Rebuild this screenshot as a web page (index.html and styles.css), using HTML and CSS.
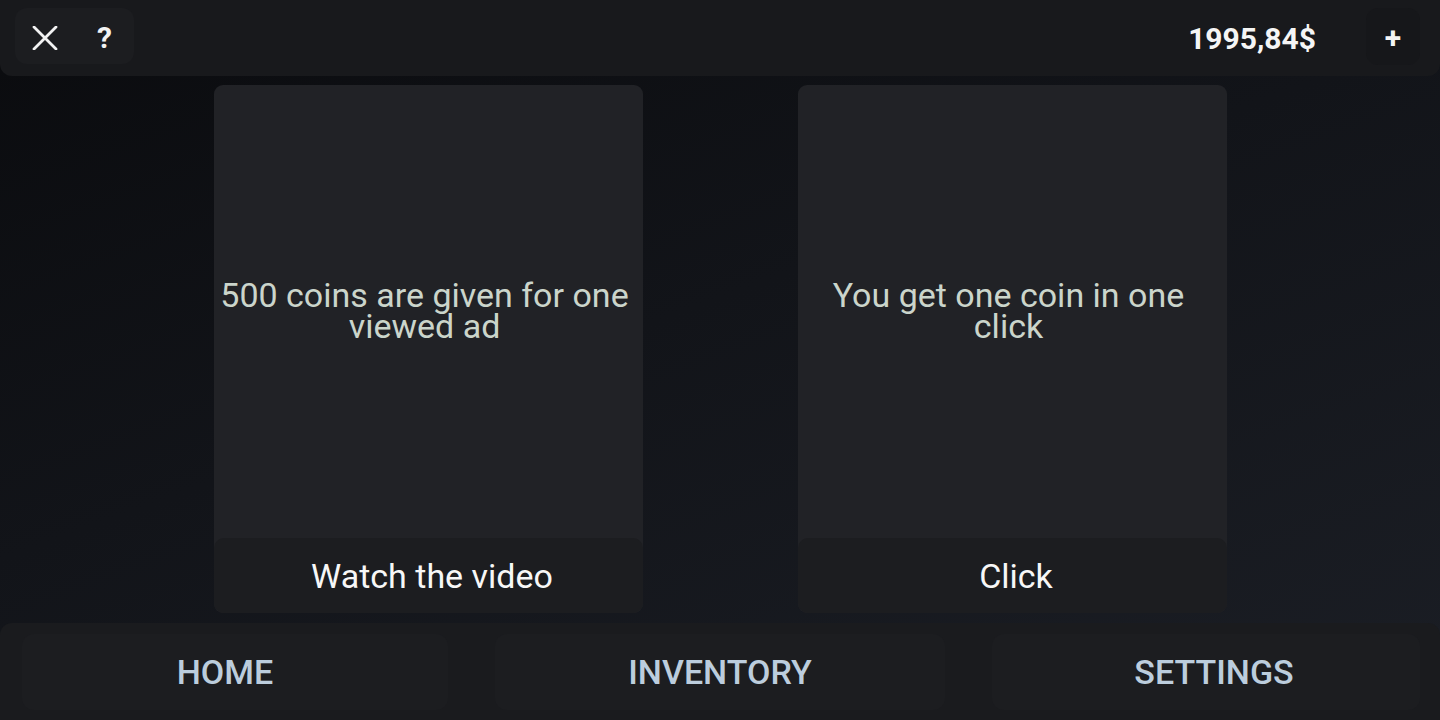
FILE: index.html
```html
<!DOCTYPE html>
<html lang="en">
<head>
  <meta charset="UTF-8" />
  <meta name="viewport" content="width=device-width, initial-scale=1.0"/>
  <title>Earn coins</title>
  <link rel="stylesheet" href="styles.css">
</head>
<body>

  <div class="topbar">
    <div class="tools">
      <button class="tool close" aria-label="Close">
        <svg width="26" height="24" viewBox="0 0 26 24">
          <path d="M2 1 L24 23 M24 1 L2 23" stroke="#f2f2f2" stroke-width="2.8" stroke-linecap="round"/>
        </svg>
      </button>
      <button class="tool help">?</button>
    </div>
    <div class="wallet">
      <span class="balance">1995,84$</span>
      <button class="add">+</button>
    </div>
  </div>

  <div class="cards">
    <div class="card">
      <div class="card-text">500 coins are given for one viewed ad</div>
      <button class="card-btn">Watch the video</button>
    </div>
    <div class="card">
      <div class="card-text">You get one coin in one click</div>
      <button class="card-btn">Click</button>
    </div>
  </div>

  <div class="nav">
    <button class="nav-btn home">HOME</button>
    <button class="nav-btn inventory">INVENTORY</button>
    <button class="nav-btn settings">SETTINGS</button>
  </div>

</body>
</html>
```

FILE: styles.css
```css
body {
  margin: 0;
  height: 720px;
  overflow: hidden;
  font-family: Roboto, 'Noto Sans', sans-serif;
  background: linear-gradient(160deg, #0a0b0e 0%, #121419 45%, #1b1e25 100%);
  display: flex;
  flex-direction: column;
}

button {
  font-family: inherit;
  border: none;
  cursor: pointer;
}

.topbar {
  height: 76px;
  box-sizing: border-box;
  padding: 8px 20px 0 15px;
  background-color: #18191c;
  border-radius: 0 0 12px 12px;
  display: flex;
  justify-content: space-between;
  align-items: flex-start;
}

.tools {
  width: 119px;
  height: 56px;
  background-color: #1c1d20;
  border-radius: 12px;
  display: flex;
  align-items: center;
  padding: 3px 0 0 16px;
  box-sizing: border-box;
}

.tool {
  background: none;
  color: #f2f2f2;
  padding: 0;
  display: flex;
  align-items: center;
  justify-content: center;
}

.close {
  width: 28px;
  height: 28px;
}

.help {
  margin-left: 38px;
  font-size: 30px;
  font-weight: 700;
  line-height: 1;
}

.wallet {
  display: flex;
  align-items: center;
  height: 57px;
}

.balance {
  color: #f5f5f5;
  font-size: 30px;
  font-weight: 700;
  margin: 3px 50px 0 0;
}

.add {
  width: 54px;
  height: 57px;
  background-color: #16171a;
  border-radius: 12px;
  color: #f5f5f5;
  font-size: 30px;
  font-weight: 700;
  line-height: 1;
  padding: 2px 0 0;
}

.cards {
  margin-top: 9px;
  display: flex;
  justify-content: center;
  gap: 155px;
}

.card {
  width: 429px;
  height: 528px;
  background-color: #212226;
  border-radius: 9px;
  display: flex;
  flex-direction: column;
}

.card-text {
  flex: 1;
  display: flex;
  align-items: center;
  justify-content: center;
  text-align: center;
  padding: 0 10px 2px 3px;
  color: #cbd5cb;
  font-size: 34px;
  line-height: 31px;
}

.card-btn {
  height: 75px;
  background-color: #1c1d20;
  border-radius: 10px;
  color: #f7f7f7;
  font-size: 34px;
  padding: 0 0 0 8px;
}

.nav {
  margin-top: 10px;
  flex: 1;
  background-color: #1a1b1e;
  border-radius: 12px 12px 0 0;
  display: flex;
  justify-content: space-between;
  align-items: flex-start;
  padding: 11px 20px 0 22px;
}

.nav-btn {
  height: 76px;
  background-color: #1c1d20;
  border-radius: 12px;
  color: #bccddd;
  font-size: 34px;
  font-weight: 500;
}

.home {
  width: 426px;
  padding-right: 26px;
}

.inventory {
  width: 450px;
}

.settings {
  width: 428px;
  padding-left: 22px;
}
```
